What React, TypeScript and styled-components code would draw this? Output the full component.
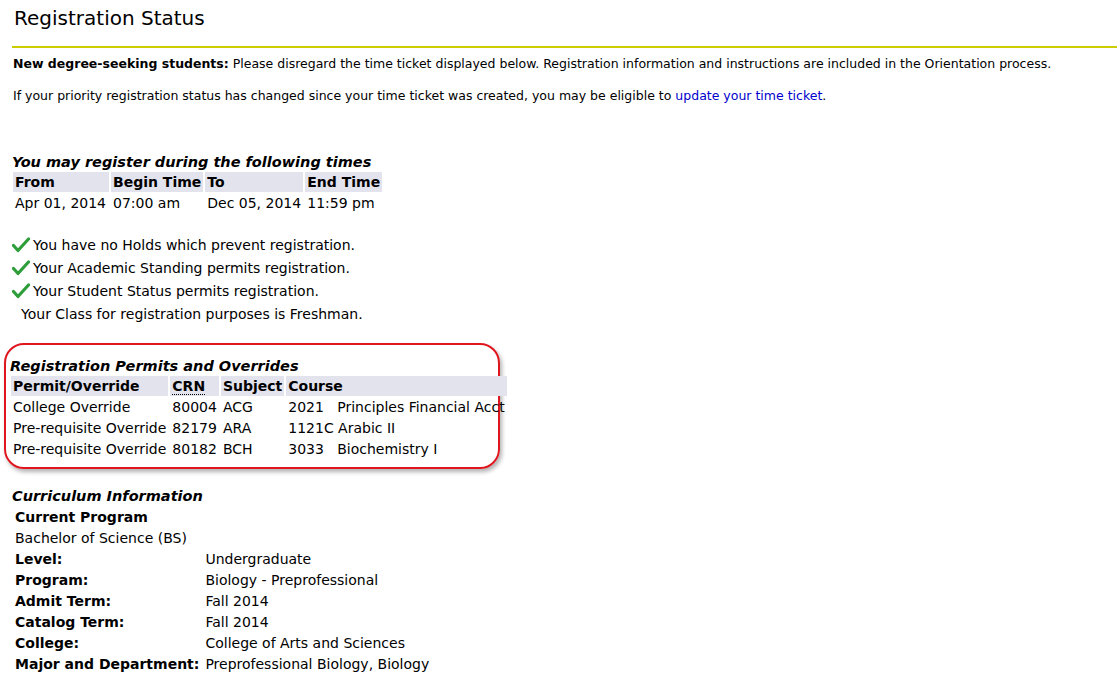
import React from "react";
import styled, { createGlobalStyle } from "styled-components";

const G = createGlobalStyle`
  body { margin: 0; background: #fff; font-family: "DejaVu Sans", Verdana, sans-serif; color: #000; }
`;
const Page = styled.div`padding: 4px 0 0 12px; font-size: 13px;`;
const Title = styled.h1`font-size: 20px; font-weight: normal; margin: 0 0 0 2px; height: 42px; line-height: 28px;`;
const Rule = styled.hr`border: 0; border-top: 2px solid #cccc00; margin: 0 0 7px 0;`;
const Para = styled.p`font-size: 12.5px; margin: 0 0 15px 1px; line-height: 17px;`;
const Link = styled.a`color: #0000cc; text-decoration: none;`;
const Caption = styled.div`font-size: 14.5px; font-weight: bold; font-style: italic; line-height: 19px;`;
const Table = styled.table`border-collapse: separate; border-spacing: 2px 0; margin-left: -1px; font-size: 14px;`;
const Th = styled.th<{ w?: number }>`
  background: #e3e3ee; text-align: left; padding: 0 2px; height: 20px; width: ${p => p.w ?? 0}px; white-space: nowrap;
`;
const Td = styled.td`padding: 0 2px; height: 21px; white-space: nowrap; vertical-align: middle;`;
const Lbl = styled.td`padding: 0 2px; height: 21px; font-weight: bold; white-space: nowrap;`;
const Abbr = styled.span`border-bottom: 1px dotted #000;`;
const Checks = styled.div`margin-top: 20px; font-size: 14px;`;
const CheckRow = styled.div`display: flex; align-items: center; gap: 3px; height: 23px;`;
const Plain = styled.div`height: 23px; display: flex; align-items: center; padding-left: 9px;`;
const Box = styled.div`
  margin: 18px 0 0 -8px; width: 478px; border: 2px solid #e0161e; border-radius: 20px;
  padding: 12px 10px 8px 4px; box-shadow: 2px 3px 4px rgba(0,0,0,0.3);
`;
const Section = styled.div`margin-top: 18px;`;

const Check = () => (
  <svg width="18" height="16" viewBox="0 0 18 16">
    <path d="M1.5 8.5 L6 13.5 L16.5 2" stroke="#2e9e3a" strokeWidth="3.2" fill="none" strokeLinecap="round" strokeLinejoin="round" />
  </svg>
);

const curr: [string, string][] = [
  ["Level:", "Undergraduate"], ["Program:", "Biology - Preprofessional"], ["Admit Term:", "Fall 2014"],
  ["Catalog Term:", "Fall 2014"], ["College:", "College of Arts and Sciences"], ["Major and Department:", "Preprofessional Biology, Biology"],
];

export default function App() {
  return (
    <Page>
      <G />
      <Title>Registration Status</Title>
      <Rule />
      <Para><b>New degree-seeking students:</b> Please disregard the time ticket displayed below. Registration information and instructions are included in the Orientation process.</Para>
      <Para>If your priority registration status has changed since your time ticket was created, you may be eligible to <Link href="#">update your time ticket</Link>.</Para>
      <div style={{ height: 34 }} />
      <Caption>You may register during the following times</Caption>
      <Table>
        <thead><tr><Th w={92}>From</Th><Th w={84}>Begin Time</Th><Th w={94}>To</Th><Th w={70}>End Time</Th></tr></thead>
        <tbody><tr><Td>Apr 01, 2014</Td><Td>07:00 am</Td><Td>Dec 05, 2014</Td><Td>11:59 pm</Td></tr></tbody>
      </Table>
      <Checks>
        <CheckRow><Check />You have no Holds which prevent registration.</CheckRow>
        <CheckRow><Check />Your Academic Standing permits registration.</CheckRow>
        <CheckRow><Check />Your Student Status permits registration.</CheckRow>
        <Plain>Your Class for registration purposes is Freshman.</Plain>
      </Checks>
      <Box>
        <Caption>Registration Permits and Overrides</Caption>
        <Table>
          <thead><tr><Th w={151}>Permit/Override</Th><Th w={43}><Abbr>CRN</Abbr></Th><Th w={57}>Subject</Th><Th w={206}>Course</Th></tr></thead>
          <tbody>
            <tr><Td>College Override</Td><Td>80004</Td><Td>ACG</Td><Td>2021&nbsp;&nbsp;&nbsp;Principles Financial Acct</Td></tr>
            <tr><Td>Pre-requisite Override</Td><Td>82179</Td><Td>ARA</Td><Td>1121C Arabic II</Td></tr>
            <tr><Td>Pre-requisite Override</Td><Td>80182</Td><Td>BCH</Td><Td>3033&nbsp;&nbsp;&nbsp;Biochemistry I</Td></tr>
          </tbody>
        </Table>
      </Box>
      <Section>
        <Caption>Curriculum Information</Caption>
        <Table>
          <tbody>
            <tr><Lbl>Current Program</Lbl><Td /></tr>
            <tr><Td>Bachelor of Science (BS)</Td><Td /></tr>
            {curr.map(([a, b]) => <tr key={a}><Lbl style={{ width: 179 }}>{a}</Lbl><Td>{b}</Td></tr>)}
          </tbody>
        </Table>
      </Section>
    </Page>
  );
}
